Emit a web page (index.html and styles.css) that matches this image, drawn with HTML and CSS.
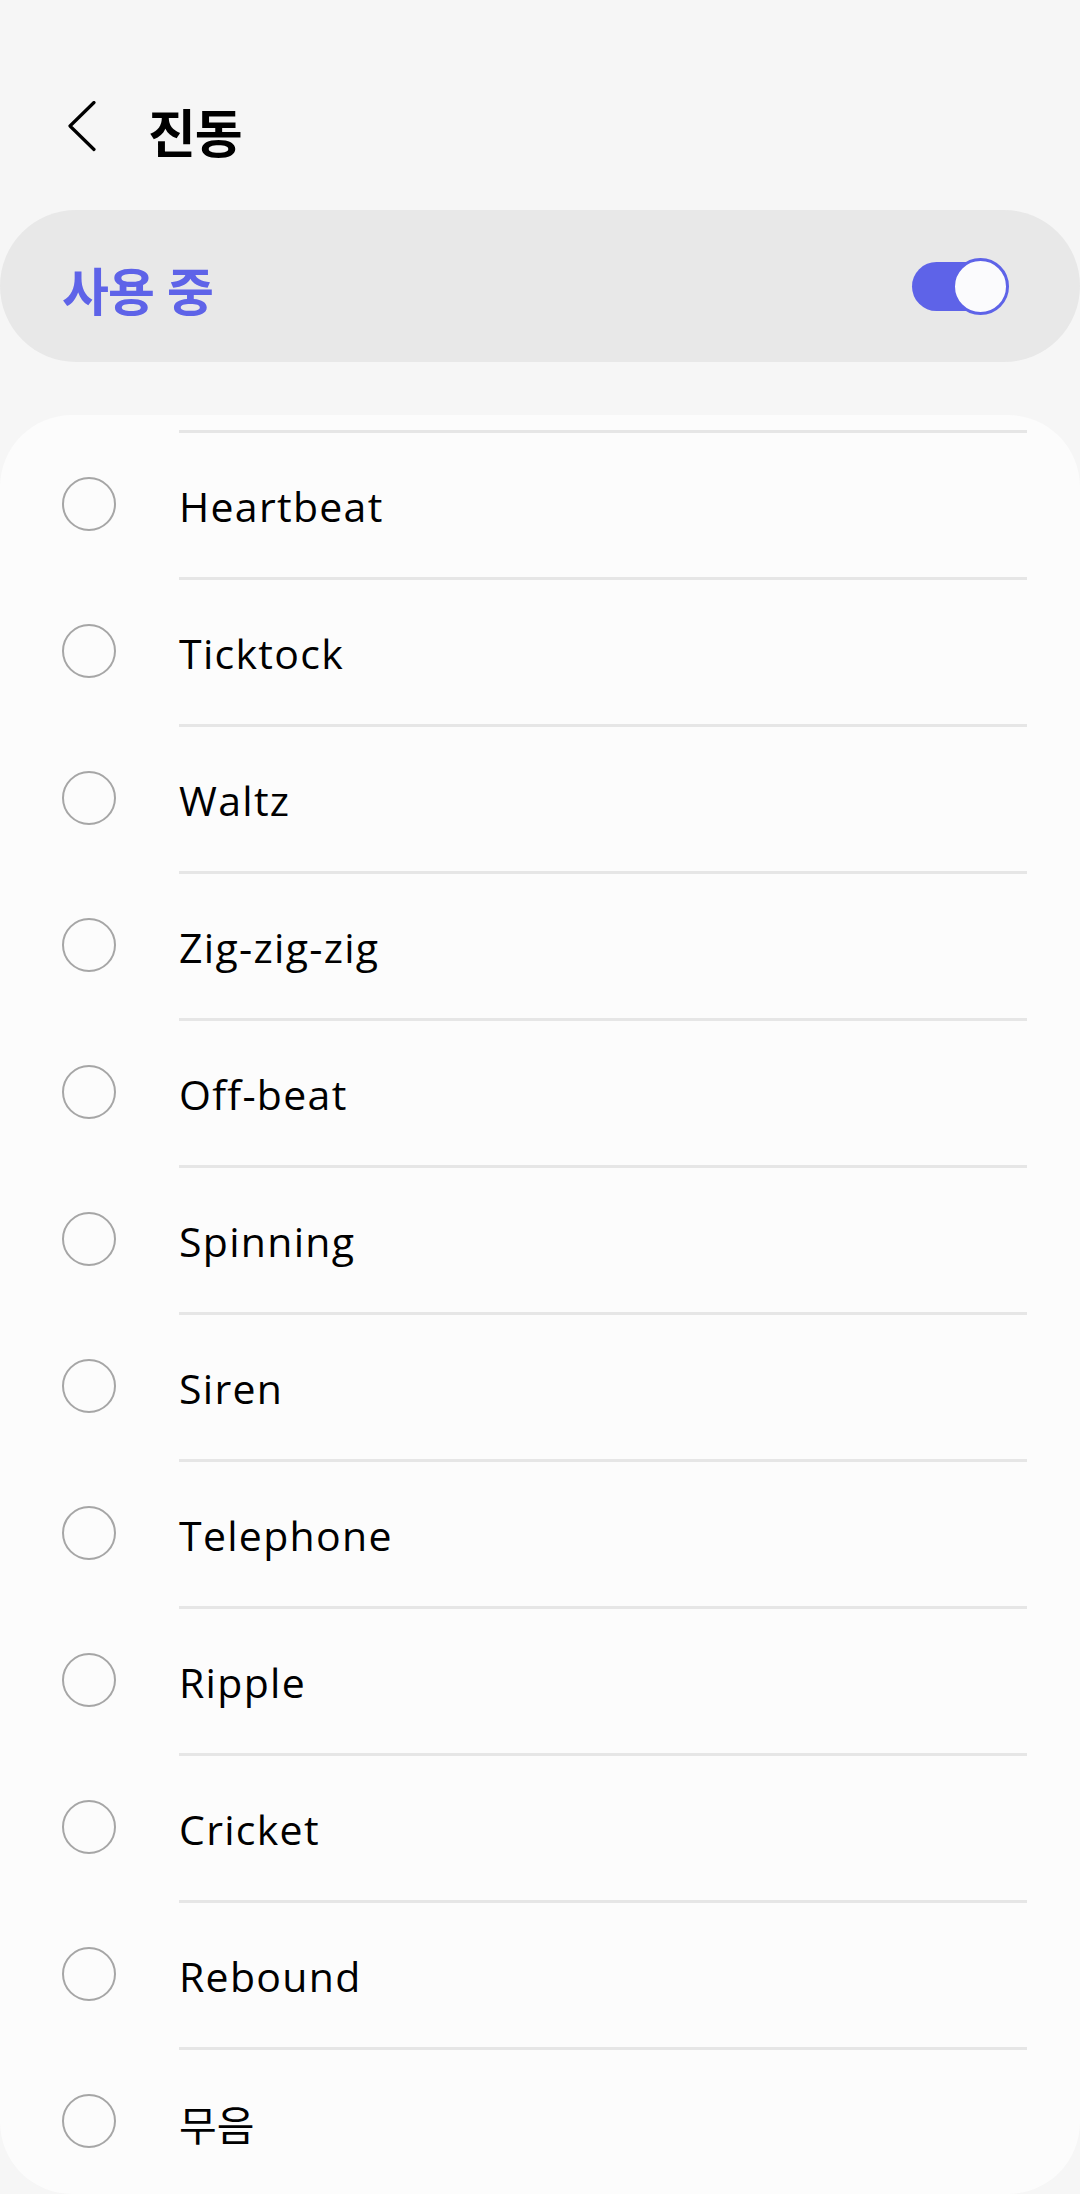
FILE: index.html
```html
<!DOCTYPE html>
<html lang="ko">
<head>
<meta charset="utf-8">
<title>진동</title>
<link rel="stylesheet" href="styles.css">
</head>
<body>
<header class="app-header">
  <svg class="back" width="40" height="60" viewBox="0 0 40 60" aria-hidden="true">
    <path d="M34 1.5 L10 25 L34 48.5" fill="none" stroke="#000" stroke-width="3.2" stroke-linecap="round" stroke-linejoin="round"/>
  </svg>
  <h1 class="title">진동</h1>
</header>

<section class="master-bar">
  <span class="master-label">사용 중</span>
  <span class="switch">
    <span class="switch-track"></span>
    <span class="switch-knob"></span>
  </span>
</section>

<ul class="card">
  <li class="item"><span class="radio-cell"><span class="radio"></span></span><span class="label">Heartbeat</span></li>
  <li class="item"><span class="radio-cell"><span class="radio"></span></span><span class="label">Ticktock</span></li>
  <li class="item"><span class="radio-cell"><span class="radio"></span></span><span class="label">Waltz</span></li>
  <li class="item"><span class="radio-cell"><span class="radio"></span></span><span class="label">Zig-zig-zig</span></li>
  <li class="item"><span class="radio-cell"><span class="radio"></span></span><span class="label">Off-beat</span></li>
  <li class="item"><span class="radio-cell"><span class="radio"></span></span><span class="label">Spinning</span></li>
  <li class="item"><span class="radio-cell"><span class="radio"></span></span><span class="label">Siren</span></li>
  <li class="item"><span class="radio-cell"><span class="radio"></span></span><span class="label">Telephone</span></li>
  <li class="item"><span class="radio-cell"><span class="radio"></span></span><span class="label">Ripple</span></li>
  <li class="item"><span class="radio-cell"><span class="radio"></span></span><span class="label">Cricket</span></li>
  <li class="item"><span class="radio-cell"><span class="radio"></span></span><span class="label">Rebound</span></li>
  <li class="item"><span class="radio-cell"><span class="radio"></span></span><span class="label label-ko">무음</span></li>
</ul>
</body>
</html>
```

FILE: styles.css
```css
html, body {
  margin: 0;
  padding: 0;
}
body {
  width: 1080px;
  height: 2194px;
  overflow: hidden;
  background: #f6f6f6;
  font-family: "Open Sans", "Noto Sans CJK KR", sans-serif;
  color: #000;
}

.app-header {
  display: flex;
  align-items: center;
  height: 110px;
  margin-top: 76px;
  padding-left: 60px;
}
.back {
  display: block;
  flex: none;
}
.title {
  margin: 0 0 0 48px;
  font-family: "Noto Sans CJK KR", sans-serif;
  font-weight: 700;
  font-size: 52px;
  line-height: 1;
  letter-spacing: -1px;
}

.master-bar {
  margin-top: 24px;
  height: 152px;
  border-radius: 76px;
  background: #e8e8e8;
  display: flex;
  align-items: center;
  justify-content: space-between;
  padding: 0 71px 0 62px;
}
.master-label {
  font-family: "Noto Sans CJK KR", sans-serif;
  font-weight: 700;
  font-size: 51px;
  color: #5e63e8;
  line-height: 1;
  padding-top: 6px;
  letter-spacing: -1px;
}
.switch {
  position: relative;
  width: 97px;
  height: 57px;
}
.switch-track {
  position: absolute;
  left: 0;
  top: 4px;
  width: 82px;
  height: 49px;
  border-radius: 25px;
  background: #5e63e8;
}
.switch-knob {
  position: absolute;
  right: 0;
  top: 0;
  width: 57px;
  height: 57px;
  box-sizing: border-box;
  border-radius: 50%;
  background: #fbfbfd;
  border: 3px solid #5e63e8;
}

.card {
  list-style: none;
  margin: 53px 0 0 0;
  padding: 15px 0 0 0;
  background: #fcfcfc;
  border-radius: 72px;
}
.item {
  display: flex;
  height: 147px;
}
.radio-cell {
  width: 179px;
  flex: none;
  display: flex;
  align-items: center;
  padding-left: 62px;
  box-sizing: border-box;
}
.radio {
  width: 54px;
  height: 54px;
  box-sizing: border-box;
  border-radius: 50%;
  border: 2.5px solid #a6a6a6;
}
.label {
  flex: 1;
  margin-right: 53px;
  border-top: 3px solid #e6e6e6;
  display: flex;
  align-items: center;
  font-size: 41px;
  font-weight: 500;
  letter-spacing: 1.3px;
  padding-top: 2px;
}
.label-ko {
  letter-spacing: 0;
  font-weight: 400;
}
```
